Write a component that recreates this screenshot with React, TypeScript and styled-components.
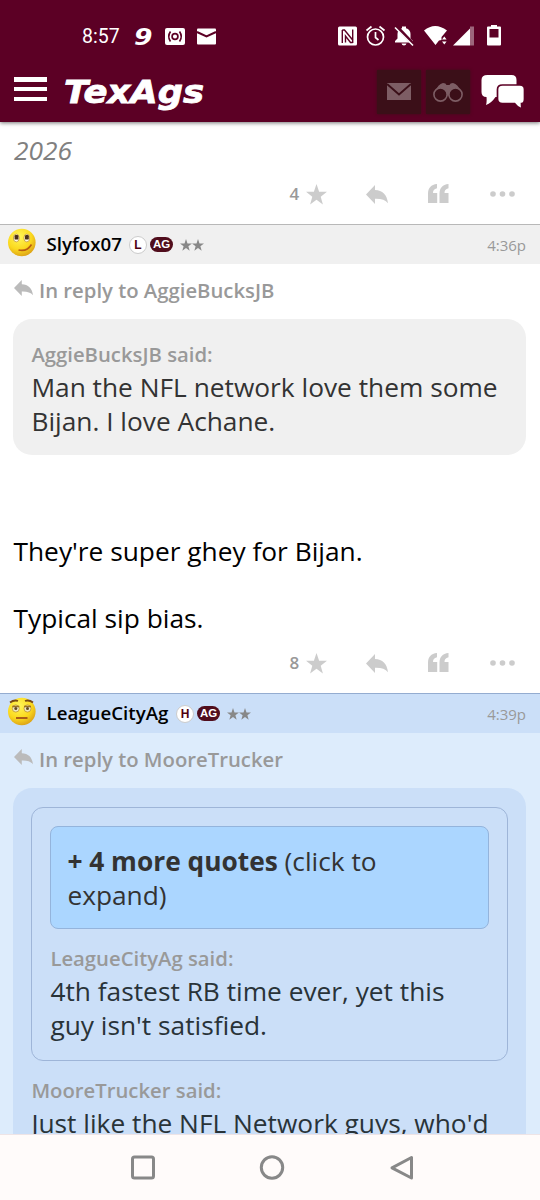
import React from "react";
import styled, { createGlobalStyle } from "styled-components";

const Global = createGlobalStyle`
  * { box-sizing: border-box; }
  html, body { margin: 0; padding: 0; background: #fff; overflow: hidden; }
`;

const Screen = styled.div`
  width: 540px;
  height: 1200px;
  display: flex;
  flex-direction: column;
  overflow: hidden;
  background: #fff;
  color: #000;
  font-family: "Open Sans", sans-serif;
`;

const Top = styled.header`
  flex: none;
  height: 122px;
  background: #5c0025;
  box-shadow: 0 1px 4px rgba(0, 0, 0, 0.55);
  z-index: 1;
`;

const StatusBar = styled.div`
  height: 72px;
  padding: 0 38px 0 82px;
  display: flex;
  align-items: center;
  justify-content: space-between;
  color: #fff;
`;

const StatusGroup = styled.div`
  display: flex;
  align-items: center;
`;

const Clock = styled.span`
  width: 48px;
  padding-top: 1px;
  font: 400 19.5px/24px Roboto, sans-serif;
`;

const NavRow = styled.div`
  height: 50px;
  padding: 0 15px 0 14px;
  display: flex;
  align-items: flex-start;
`;

const Burger = styled.div`
  margin-top: 5px;
  width: 33px;
  height: 24px;
  display: flex;
  flex-direction: column;
  justify-content: space-between;
`;

const Bar = styled.i`
  height: 4.5px;
  background: #fff;
`;

const Logo = styled.svg`
  margin: -2px 0 0 15px;
  flex: none;
`;

const NavButtons = styled.div`
  margin-left: auto;
  display: flex;
  gap: 5px;
`;

const NavButton = styled.div<{ $plain?: boolean }>`
  margin-top: -2px;
  width: 44px;
  height: 44px;
  display: flex;
  align-items: center;
  justify-content: center;
  background: ${(p) => (p.$plain ? "transparent" : "#3b0f18")};
  box-shadow: ${(p) => (p.$plain ? "none" : "0 0 3px #3b0f18")};
  margin-left: ${(p) => (p.$plain ? 6 : 0)}px;
`;

const Feed = styled.main`
  flex: 1;
  min-height: 0;
  overflow: hidden;
`;

const Post = styled.article<{ $own?: boolean }>`
  background: ${(p) => (p.$own ? "#ddecfc" : "#fff")};
`;

const PrevText = styled.div`
  height: 49px;
  padding: 11px 14px 0;
  font-size: 26.3px;
  line-height: 34px;
  font-style: italic;
  color: #808080;
`;

const Actions = styled.div`
  height: 46px;
  margin-bottom: 7px;
  padding-right: 25.5px;
  display: flex;
  align-items: center;
  justify-content: flex-end;
`;

const LikeCount = styled.span`
  width: 16px;
  font-size: 17px;
  line-height: 20px;
  font-weight: 600;
  color: #999;
`;

const LikeStar = styled.span`
  display: flex;
  margin-right: 39px;
`;

const QuoteMark = styled.svg`
  margin: -2px 41px 0 40px;
`;

const PostHead = styled.div<{ $own?: boolean }>`
  height: 40px;
  padding: 0 14px 0 7px;
  display: flex;
  align-items: center;
  background: ${(p) => (p.$own ? "#cbdff8" : "#f0f0f0")};
  border-top: 1px solid ${(p) => (p.$own ? "#94acd0" : "#b8b8b8")};
`;

const FaceSvg = styled.svg`
  margin: -5px 10.5px 0 0;
  flex: none;
`;

const UserName = styled.span<{ $w: number }>`
  width: ${(p) => p.$w}px;
  margin-top: -1px;
  font-size: 18.7px;
  line-height: 24px;
  font-weight: 600;
  white-space: nowrap;
`;

const Letter = styled.span`
  width: 18px;
  height: 18px;
  margin: 0 3px 0 0;
  border: 1px solid #ccc;
  border-radius: 9px;
  background: #fff;
  color: #500012;
  font: 700 12px/16px "Liberation Sans", sans-serif;
  text-align: center;
`;

const AgBadge = styled.span`
  width: 23px;
  height: 15px;
  margin: 0 7px 0 0;
  border-radius: 8px;
  background: #500d1c;
  color: #fff;
  font: 700 11.5px/15px "Liberation Sans", sans-serif;
  text-align: center;
`;

const Time = styled.time`
  margin: 0 0 0 auto;
  font-size: 15px;
  line-height: 20px;
  color: #999;
`;

const ReplyTo = styled.div`
  height: 55px;
  padding: 0 14px 3px;
  display: flex;
  align-items: center;
  gap: 6px;
  font-size: 20.3px;
  line-height: 26px;
  font-weight: 600;
  color: #999;
  & > svg { margin-top: -4px; }
`;

const Quote = styled.blockquote<{ $own?: boolean; $h?: number }>`
  margin: 0 14px 0 13.4px;
  height: ${(p) => (p.$h ? p.$h + "px" : "auto")};
  padding: ${(p) => (p.$own ? "19px 18px 40px" : "20px 18px 0")};
  border-radius: 19px;
  background: ${(p) => (p.$own ? "#cbdff8" : "#f0f0f0")};
`;

const Nested = styled.div`
  height: 254px;
  padding: 18px 18px 0;
  border: 1px solid #9eb5d8;
  border-radius: 12px;
  margin-bottom: 14px;
`;

const Expand = styled.div`
  height: 103px;
  padding: 18px 16px 0;
  margin-bottom: 14px;
  border: 1px solid #94b4dc;
  border-radius: 8px;
  background: #abd6ff;
  font-size: 26.3px;
  line-height: 33.5px;
  color: #333;
  & > b { font-weight: 700; }
`;

const Said = styled.div`
  font-size: 20.3px;
  line-height: 30px;
  font-weight: 600;
  color: #999;
`;

const Words = styled.div<{ $tone?: string }>`
  padding-top: 2px;
  font-size: 26.3px;
  line-height: 33.5px;
  color: ${(p) => p.$tone || "#333"};
  white-space: nowrap;
`;

const Body = styled.div`
  height: 185px;
  padding: 78px 13.5px 0;
`;

const SystemNav = styled.footer`
  flex: none;
  height: 66px;
  padding: 0 125px 0 129px;
  border-top: 1px solid #eee4e6;
  display: flex;
  align-items: center;
  justify-content: space-between;
  background: #fffbfa;
`;

const Star = ({ size, fill }: { size: number; fill: string }) => (
  <svg width={size} height={size} viewBox="0 0 20 20" fill={fill}>
    <path d="M10 0l2.500 7.300 7.500.1-6 4.700 2.100 7.400L10 15.100l-6.100 4.400L6 12.100 0 7.400l7.500-.1z" />
  </svg>
);

const ReplyIcon = ({ w, h, fill }: { w: number; h: number; fill: string }) => (
  <svg width={w} height={h} viewBox="0 0 22 19" fill={fill} preserveAspectRatio="none">
    <path d="M0 9.500L9 0v5c7.500.3 12 4.500 13 13.200C19.500 14.700 15 13.500 9 13.700V19z" />
  </svg>
);

const ActionRow = ({ count }: { count: string }) => (
  <Actions>
    <LikeCount>{count}</LikeCount>
    <LikeStar><Star size={21} fill="#ccc" /></LikeStar>
    <ReplyIcon w={22} h={19} fill="#ccc" />
    <QuoteMark width="21" height="19" viewBox="0 0 21 19" fill="#ccc">
      <path d="M0 19V9.500C0 4 3 .5 9 0v4.200C6 4.800 5 6.500 5 9h4.200v10zM11.500 19V9.500C11.500 4 14.500.5 20.500 0v4.200c-3 .6-4 2.300-4 4.800h4v10z" />
    </QuoteMark>
    <svg width="25" height="6" viewBox="0 0 25 6" fill="#ccc">
      <circle cx="3" cy="3" r="2.800" /><circle cx="12.500" cy="3" r="2.800" /><circle cx="22" cy="3" r="2.800" />
    </svg>
  </Actions>
);

const Face = ({ tired }: { tired?: boolean }) => (
  <FaceSvg width="29" height="30" viewBox="0 0 29 30">
    <defs>
      <radialGradient id="skin" cx="0.4" cy="0.3" r="0.75">
        <stop offset="0" stopColor="#fff65a" />
        <stop offset="0.6" stopColor="#fbd91e" />
        <stop offset="1" stopColor="#d99c16" />
      </radialGradient>
    </defs>
    <circle cx="14.800" cy="15.500" r="13.800" fill="url(#skin)" />
    {tired ? (
      <>
        <path d="M3 6.500Q7 3.500 11 5M18 5q4-1.500 8 1.500" fill="none" stroke="#7a4a12" strokeWidth="1.800" />
        <ellipse cx="8.800" cy="12.500" rx="3.500" ry="3.600" fill="#eee8c0" stroke="#b98a25" strokeWidth=".7" />
        <ellipse cx="20.500" cy="12.500" rx="3.500" ry="3.600" fill="#eee8c0" stroke="#b98a25" strokeWidth=".7" />
        <path d="M5.300 10.500h7M17 10.500h7" stroke="#9b7120" strokeWidth="1.400" />
        <circle cx="8.800" cy="12.500" r="1.500" fill="#624927" /><circle cx="20.500" cy="12.500" r="1.500" fill="#624927" />
        <path d="M9 22h11.500" stroke="#9d4816" strokeWidth="1.700" />
      </>
    ) : (
      <>
        <ellipse cx="9.300" cy="11" rx="2.900" ry="3.900" fill="#fffbe4" stroke="#b98a25" strokeWidth=".7" />
        <ellipse cx="19.800" cy="11" rx="2.900" ry="3.900" fill="#fffbe4" stroke="#b98a25" strokeWidth=".7" />
        <rect x="7.600" y="8" width="3.800" height="4.600" rx="1.200" fill="#4b3018" /><rect x="18" y="8" width="3.800" height="4.600" rx="1.200" fill="#4b3018" />
        <path d="M11.500 23Q20 25 24.500 17.500" fill="none" stroke="#b85a12" strokeWidth="1.600" />
      </>
    )}
  </FaceSvg>
);

const Header = ({ name, w, letter, time, own }: { name: string; w: number; letter: string; time: string; own?: boolean }) => (
  <PostHead $own={own}>
    <Face tired={own} />
    <UserName $w={w}>{name}</UserName>
    <Letter>{letter}</Letter>
    <AgBadge>AG</AgBadge>
    <Star size={12} fill="#888" />
    <Star size={12} fill="#888" />
    <Time>{time}</Time>
  </PostHead>
);

const LeftStatusIcons = () => (
  <svg width="90" height="28" viewBox="-4 -3 90 28" fill="#fff">
    <text x="0" y="19.500" fontFamily="DejaVu Sans" fontWeight="700" fontStyle="italic" fontSize="23.500" textLength="18.500" lengthAdjust="spacingAndGlyphs">9</text>
    <rect x="31" y="3" width="20" height="17" rx="2" />
    <g fill="none" stroke="#5c0025" strokeWidth="1.700">
      <circle cx="41" cy="11.500" r="2.900" />
      <path d="M36.500 6.500q-3.500 5 0 10M45.500 6.500q3.500 5 0 10" />
    </g>
    <rect x="63" y="3.500" width="19" height="16" rx="1" />
    <path d="M63 7l9.500 4.500L82 7" fill="none" stroke="#5c0025" strokeWidth="2" />
  </svg>
);

const RightStatusIcons = () => (
  <svg width="164" height="24" viewBox="338 24.500 164 24" fill="#fff">
    <rect x="338" y="27" width="19" height="19" rx="1.500" />
    <path d="M342.300 43.500V30.500M352.700 30v13.500" fill="none" stroke="#5c0025" strokeWidth="1.400" />
    <path d="M342.300 30.500h2.200l8.200 10M352.700 43h-2.200l-5-6.500v6.500" fill="none" stroke="#5c0025" strokeWidth="1.400" />
    <g fill="none" stroke="#fff" strokeWidth="1.700">
      <circle cx="375.500" cy="37.500" r="8" />
      <path d="M375.500 32.500v5.500l3 2.500M366.500 31l5-4M384.500 31l-5-4" />
    </g>
    <path d="M395 43v-1.500l2.500-2.500v-4.500c0-3 1.500-5 4.500-5.800V27h4v1.700c3 .8 4.500 3 4.500 5.800V39l2.500 2.500V43zM401.500 44h5q-.5 2-2.500 2t-2.500-2z" />
    <path d="M396 26.500l18 19" stroke="#5c0025" strokeWidth="3.600" />
    <path d="M395 28l18 18" stroke="#fff" strokeWidth="1.600" />
    <path d="M424 31q11-9 23 0l-5.500 6.500v3l-2.500.5-3.500 4.500z" />
    <path d="M442 40l2.300-3 2.300 3zM442 42l2.300 3 2.300-3z" />
    <path d="M470 27v19h4V27z" opacity=".4" />
    <path d="M453 46l17-17v17z" />
    <path d="M491 25.500h6V27h3q1 0 1 1v17q0 1-1 1h-12q-1 0-1-1V28q0-1 1-1h3z" />
    <rect x="489.500" y="29.500" width="9" height="8.500" fill="#5c0025" />
  </svg>
);

export default function App() {
  return (
    <Screen>
      <Global />
      <Top>
        <StatusBar>
          <StatusGroup>
            <Clock>8:57</Clock>
            <LeftStatusIcons />
          </StatusGroup>
          <RightStatusIcons />
        </StatusBar>
        <NavRow>
          <Burger><Bar /><Bar /><Bar /></Burger>
          <Logo width="146" height="42" viewBox="0 0 146 42">
            <text x="2" y="33" fill="#fff" stroke="#fff" strokeWidth=".8" fontFamily="DejaVu Sans" fontWeight="700" fontStyle="italic" fontSize="31.500" textLength="140" lengthAdjust="spacingAndGlyphs">TexAgs</text>
          </Logo>
          <NavButtons>
            <NavButton>
              <svg width="24" height="18" viewBox="0 0 24 18">
                <rect width="24" height="17" fill="#7d5d64" />
                <path d="M0 1l12 10.500L24 1" fill="none" stroke="#3b0f18" strokeWidth="2" />
              </svg>
            </NavButton>
            <NavButton>
              <svg width="30" height="19" viewBox="0 0 30 19">
                <path d="M2 9Q5 1 10 0q3 0 3.500 2h3Q17 0 20 0q5 1 8 9l-8 8-5-5-5 5z" fill="#7d5d64" />
                <g fill="#3b0f18" stroke="#7d5d64" strokeWidth="1.600">
                  <circle cx="7.500" cy="11.500" r="6.600" /><circle cx="22.500" cy="11.500" r="6.600" />
                </g>
              </svg>
            </NavButton>
            <NavButton $plain>
              <svg width="44" height="36" viewBox="480.500 73 44 36" fill="#fff">
                <path d="M487 74h24q5 0 5 5v12q0 5-5 5h-16q-4 6-9.500 8 1-3 .5-8-5 0-5-5V79q0-5 6-5z" />
                <path d="M502 84h17.500q4.500 0 4.500 4.500v9.500q0 4.500-3 4.500 0 3 .5 5.500-5-1.500-7.500-5.500H502q-5 0-5-4.500V88.500q0-4.500 5-4.500z" stroke="#5c0025" strokeWidth="1.700" />
              </svg>
            </NavButton>
          </NavButtons>
        </NavRow>
      </Top>

      <Feed>
        <Post>
          <PrevText>2026</PrevText>
          <ActionRow count="4" />
        </Post>
        <Post>
          <Header name="Slyfox07" w={82.5} letter="L" time="4:36p" />
          <ReplyTo><ReplyIcon w={19} h={16} fill="#bbb" />In reply to AggieBucksJB</ReplyTo>
          <Quote $h={136}>
            <Said>AggieBucksJB said:</Said>
            <Words>Man the NFL network love them some<br />Bijan. I love Achane.</Words>
          </Quote>
          <Body>
            <Words $tone="#000">They're super ghey for Bijan.<br /><br />Typical sip bias.</Words>
          </Body>
          <ActionRow count="8" />
        </Post>
        <Post $own>
          <Header name="LeagueCityAg" w={129.5} letter="H" time="4:39p" own />
          <ReplyTo><ReplyIcon w={19} h={16} fill="#bbb" />In reply to MooreTrucker</ReplyTo>
          <Quote $own>
            <Nested>
              <Expand><b>+ 4 more quotes</b> (click to<br />expand)</Expand>
              <Said>LeagueCityAg said:</Said>
              <Words $tone="#293338">4th fastest RB time ever, yet this<br />guy isn't satisfied.</Words>
            </Nested>
            <Said>MooreTrucker said:</Said>
            <Words $tone="#293338">Just like the NFL Network guys, who'd</Words>
          </Quote>
        </Post>
      </Feed>

      <SystemNav>
        <svg width="28" height="28" viewBox="0 0 28 28" fill="none" stroke="#888" strokeWidth="3">
          <rect x="3.500" y="3" width="21" height="21" rx="2" />
        </svg>
        <svg width="28" height="28" viewBox="0 0 28 28" fill="none" stroke="#888" strokeWidth="3">
          <circle cx="14" cy="13.500" r="10.700" />
        </svg>
        <svg width="28" height="28" viewBox="0 0 28 28" fill="none" stroke="#888" strokeWidth="3" strokeLinejoin="round">
          <path d="M24.500 3.500v20.500L5 13.800z" />
        </svg>
      </SystemNav>
    </Screen>
  );
}
